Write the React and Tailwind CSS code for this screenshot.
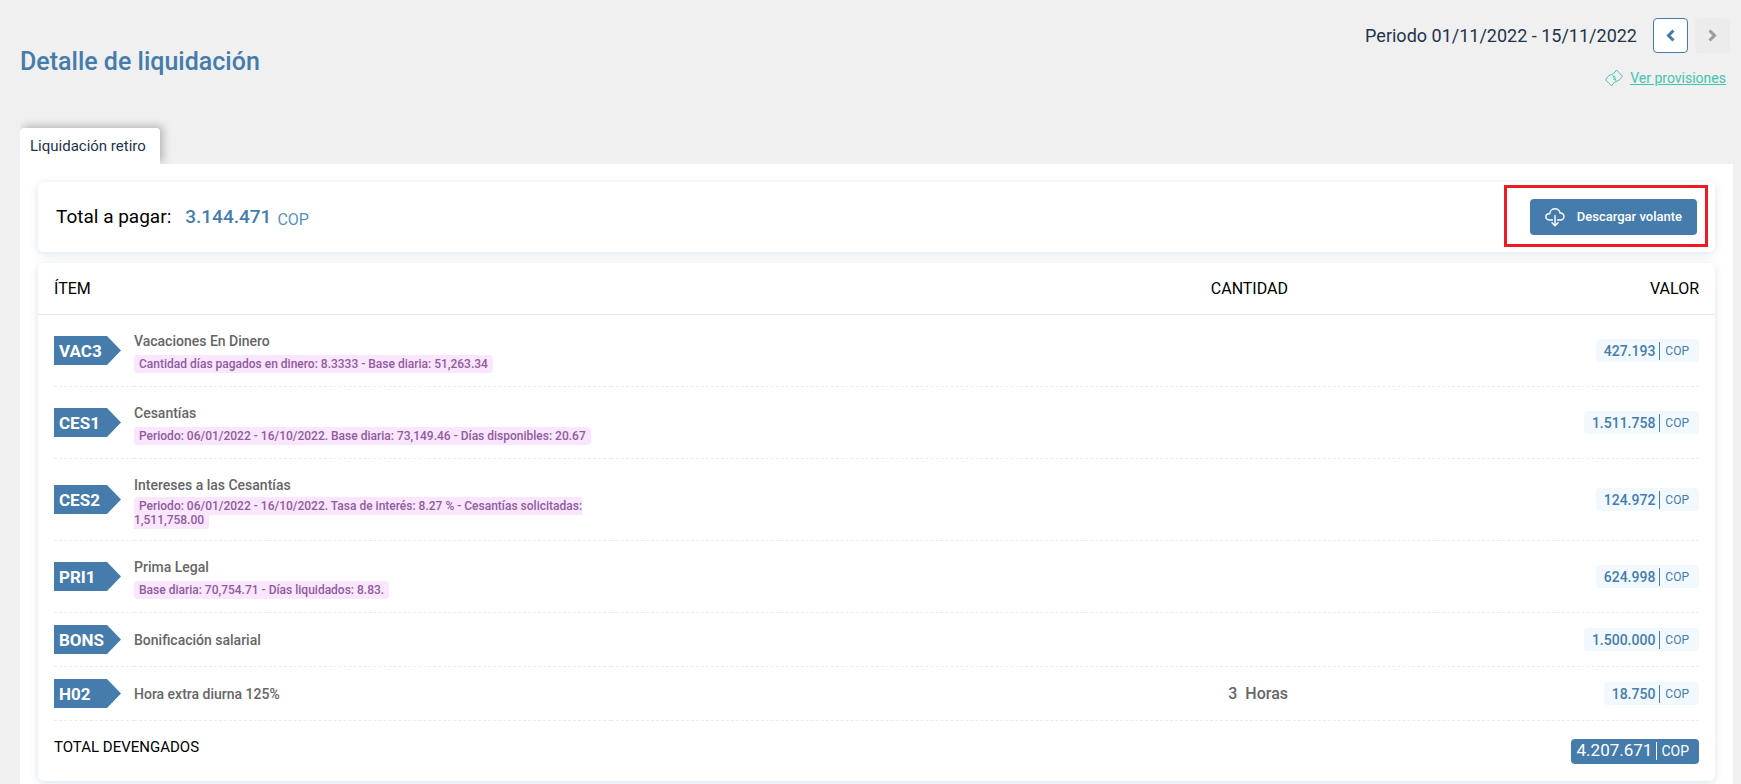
const items = [
  {
    code: 'VAC3',
    name: 'Vacaciones En Dinero',
    detail: 'Cantidad días pagados en dinero: 8.3333 - Base diaria: 51,263.34',
    value: 427193,
  },
  {
    code: 'CES1',
    name: 'Cesantías',
    detail:
      'Periodo: 06/01/2022 - 16/10/2022. Base diaria: 73,149.46 - Días disponibles: 20.67',
    value: 1511758,
  },
  {
    code: 'CES2',
    name: 'Intereses a las Cesantías',
    detail:
      'Periodo: 06/01/2022 - 16/10/2022. Tasa de interés: 8.27 % - Cesantías solicitadas: 1,511,758.00',
    value: 124972,
  },
  {
    code: 'PRI1',
    name: 'Prima Legal',
    detail: 'Base diaria: 70,754.71 - Días liquidados: 8.83.',
    value: 624998,
  },
  { code: 'BONS', name: 'Bonificación salarial', value: 1500000 },
  {
    code: 'H02',
    name: 'Hora extra diurna 125%',
    quantity: 3,
    unit: 'Horas',
    value: 18750,
  },
];

function formatAmount(value) {
  return String(value).replace(/\B(?=(\d{3})+(?!\d))/g, '.');
}

function ChevronIcon({ direction }) {
  return (
    <svg
      viewBox="0 0 9 13"
      className="h-[13px] w-[9px]"
      fill="none"
      stroke="currentColor"
      strokeWidth="3"
      aria-hidden="true"
    >
      <path d={direction === 'left' ? 'M7.5 1.5l-5 5 5 5' : 'M1.5 1.5l5 5-5 5'} />
    </svg>
  );
}

function TicketIcon() {
  return (
    <svg
      viewBox="0 0 18 18"
      className="size-[18px]"
      fill="none"
      stroke="currentColor"
      strokeLinejoin="round"
      aria-hidden="true"
    >
      <path d="M11.5 1C9.5 4.500 7.500 5 5 6.200 3 7.200 1.500 8.500.7 11l6 6c1.500-3.500 3.500-4 6-5.200 2-1 3.700-2.300 4.600-4.800Z" />
      <path
        d="M10.300 7.600c-.8-1-2.500-.2-1.900.9.500.8 1.800.2 2.200 1.100.4 1.100-1.400 1.800-2.200.7M8 6.500l.7.900M9.900 10.400l.7.900"
        strokeLinecap="round"
      />
    </svg>
  );
}

function CloudDownloadIcon() {
  return (
    <svg
      viewBox="0 0 20 20"
      className="size-5"
      fill="none"
      stroke="currentColor"
      strokeWidth="1.4"
      strokeLinejoin="round"
      strokeLinecap="round"
      aria-hidden="true"
    >
      <path d="M7.500 13H4a3 3 0 0 1 0-6.200h.8a5.200 5.200 0 0 1 10.300-.8 3.500 3.500 0 0 1 .7 7h-3.300" />
      <path d="M10 8.500v10M7 15.800l3 3 3-3" />
    </svg>
  );
}

function CodeTag({ children }) {
  return (
    <span className="flex h-[29px] w-[67px] items-center bg-[#457cac] pt-px pl-[5px] text-[17px] leading-none font-bold text-white [clip-path:polygon(0_0,53px_0,100%_50%,53px_100%,0_100%)]">
      {children}
    </span>
  );
}

function ValuePill({ value }) {
  return (
    <span className="inline-flex h-[23px] items-center rounded bg-[#f1f8fe] pr-2.5 pl-2 text-sm font-medium text-[#457cac]">
      {formatAmount(value)}
      <span className="ml-1 border-l border-[#457cac] pl-[5px] text-xs leading-[18px] font-normal">
        COP
      </span>
    </span>
  );
}

export default function App() {
  return (
    <div className="flex min-h-screen flex-col bg-[#f0f0f0] pr-2 pl-5 font-['Roboto',sans-serif]">
      <header className="flex h-32 justify-between pr-[3px]">
        <h1 className="pt-[47px] text-[25px] leading-[30px] font-medium text-[#457cac]">
          Detalle de liquidación
        </h1>
        <div className="flex flex-col items-end pt-[18px]">
          <div className="flex items-center">
            <span className="mr-4 text-lg text-[#22344a]">
              Periodo 01/11/2022 - 15/11/2022
            </span>
            <button
              type="button"
              aria-label="Periodo anterior"
              className="mr-[7px] flex size-[35px] items-center justify-center rounded border border-[#457cac] bg-white text-[#457cac]"
            >
              <ChevronIcon direction="left" />
            </button>
            <button
              type="button"
              aria-label="Periodo siguiente"
              disabled
              className="flex size-[35px] items-center justify-center rounded bg-[#ececec] text-[#9b9b9b]"
            >
              <ChevronIcon direction="right" />
            </button>
          </div>
          <a
            href="#provisiones"
            className="mt-[15px] mr-1 flex items-center gap-[7px] text-sm leading-5 text-[#43c3b1]"
          >
            <TicketIcon />
            <span className="underline">Ver provisiones</span>
          </a>
        </div>
      </header>

      <main className="flex grow flex-col">
        <div role="tablist" className="-mt-3 flex overflow-hidden pt-3">
          <button
            type="button"
            role="tab"
            aria-selected="true"
            className="h-9 min-w-[140px] rounded-t bg-white px-2.5 pt-px text-left text-[15px] text-[#22344a] shadow-[3px_-2px_8px_rgba(0,0,0,0.25)]"
          >
            Liquidación retiro
          </button>
        </div>

        <div className="grow bg-white px-[18px] pt-[18px]">
          <section className="flex h-[70px] items-center justify-between rounded-md bg-white px-[18px] shadow-[0_2px_10px_rgba(69,124,172,0.2)]">
            <p className="flex items-center text-[19px] text-black">
              Total a pagar:
              <span className="ml-3.5 font-medium text-[#457cac]">3.144.471</span>
              <span className="ml-1.5 pt-1.5 text-base text-[#5a90bf]">COP</span>
            </p>
            <div className="relative">
              <button
                type="button"
                className="flex h-9 items-center gap-3 rounded bg-[#457cac] px-[15px] text-[13px] font-medium text-white"
              >
                <CloudDownloadIcon />
                Descargar volante
              </button>
              <span className="pointer-events-none absolute -top-3.5 -right-[11px] -bottom-3 -left-[26px] border-[3px] border-[#ed1c24]" />
            </div>
          </section>

          <section className="mt-[11px] rounded-md bg-white shadow-[0_2px_10px_rgba(69,124,172,0.2)]">
            <table className="w-full table-fixed border-separate border-spacing-0">
              <colgroup>
                <col className="w-4" />
                <col className="w-20" />
                <col className="w-[477px]" />
                <col />
                <col className="w-[411px]" />
                <col className="w-4" />
              </colgroup>
              <thead>
                <tr className="h-[52px] text-base text-black [&>th]:border-b [&>th]:border-[#e6e6e6] [&>th]:font-normal">
                  <th />
                  <th colSpan={2} className="text-left">ÍTEM</th>
                  <th className="text-right">CANTIDAD</th>
                  <th className="text-right">VALOR</th>
                  <th />
                </tr>
              </thead>
              <tbody>
                {items.map((item) => (
                  <tr
                    key={item.code}
                    className="text-[#666] [&>td]:border-dashed [&>td]:border-[#ececec] [&>td:not(:first-child):not(:last-child)]:border-b"
                  >
                    <td />
                    <td className="py-3">
                      <CodeTag>{item.code}</CodeTag>
                    </td>
                    <td className={item.detail ? 'pt-4 pb-[9px]' : 'py-3'}>
                      <div className="text-sm leading-5 font-medium">{item.name}</div>
                      {item.detail && (
                        <div className="mt-0.5 flex min-h-6 items-center pt-0.5 pb-1 text-xs leading-[14px] font-medium text-[#8f5c9c]">
                          <div>
                            <span className="rounded bg-[#fae6ff] px-[5px] py-0.5">
                              {item.detail}
                            </span>
                          </div>
                        </div>
                      )}
                    </td>
                    <td className="text-right text-base font-medium">
                      {item.quantity && (
                        <>
                          {item.quantity}
                          <span className="ml-2">{item.unit}</span>
                        </>
                      )}
                    </td>
                    <td className="text-right">
                      <ValuePill value={item.value} />
                    </td>
                    <td />
                  </tr>
                ))}
              </tbody>
              <tfoot>
                <tr className="h-[60px]">
                  <td />
                  <td colSpan={3} className="pb-2 text-[15px] text-black">
                    TOTAL DEVENGADOS
                  </td>
                  <td className="text-right">
                    <span className="inline-flex h-[25px] items-center rounded bg-[#457cac] pr-2.5 pl-1.5 text-[17px] text-white">
                      4.207.671
                      <span className="ml-1 border-l border-white pl-1 text-sm leading-[18px]">
                        COP
                      </span>
                    </span>
                  </td>
                  <td />
                </tr>
              </tfoot>
            </table>
          </section>
        </div>
      </main>
    </div>
  );
}
